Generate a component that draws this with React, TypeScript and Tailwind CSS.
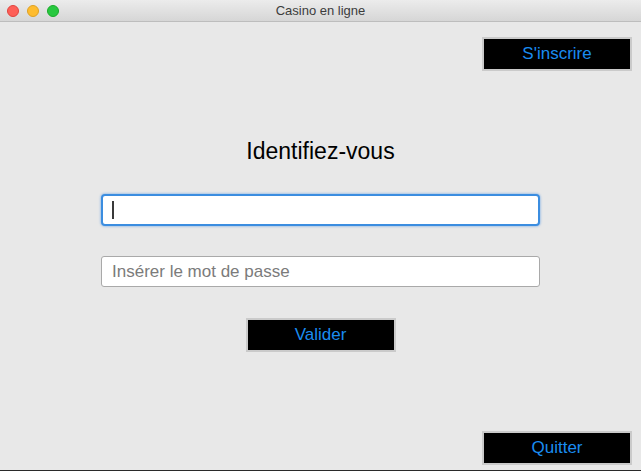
export default function App() {
  const font = { fontFamily: '"Liberation Sans", Arial, sans-serif' }
  return (
    <div
      className="flex h-[471px] w-[641px] flex-col overflow-hidden border-b border-[#2a2a2a] bg-[#e8e8e8]"
      style={font}
    >
      {/* Title bar */}
      <div className="relative flex h-[22px] shrink-0 items-center justify-center border-b border-[#bdbdbd] bg-gradient-to-b from-[#ececec] to-[#d6d6d6]">
        <div className="absolute left-[7px] top-[5px] flex gap-[8px]">
          <span className="h-[12px] w-[12px] rounded-full border border-[#e0443e] bg-[#fe5f57]" />
          <span className="h-[12px] w-[12px] rounded-full border border-[#dea123] bg-[#febc2e]" />
          <span className="h-[12px] w-[12px] rounded-full border border-[#1aab29] bg-[#28c840]" />
        </div>
        <span className="text-[13px] text-[#3c3c3c]">Casino en ligne</span>
      </div>

      <div className="flex flex-1 flex-col">
        <div className="flex justify-end pr-[9px] pt-[15px]">
          <button className="h-[34px] w-[150px] border-2 border-[#cacaca] bg-black text-[17px] text-[#1a8cf0]">
            S'inscrire
          </button>
        </div>

        <div className="flex flex-col items-center">
          <h1 className="mt-[67px] text-[23px] leading-[26px] text-black">Identifiez-vous</h1>

          <div className="mt-[30px] flex h-[32px] w-[439px] items-center rounded-[4px] border-2 border-[#3b8de0] bg-white pl-[9px] shadow-[0_0_2px_1px_rgba(80,150,230,0.4)]">
            <span className="h-[18px] w-[2px] bg-[#3a3a3a]" />
          </div>

          <div className="mt-[30px] flex h-[31px] w-[439px] items-center rounded-[3px] border border-[#a9a9a9] bg-white pl-[10px]">
            <span className="text-[17px] text-[#7b7b7b]">Insérer le mot de passe</span>
          </div>

          <button className="mt-[31px] h-[34px] w-[150px] border-2 border-[#cacaca] bg-black text-[17px] text-[#1a8cf0]">
            Valider
          </button>
        </div>

        <div className="mt-auto flex justify-end pb-[5px] pr-[9px]">
          <button className="h-[34px] w-[150px] border-2 border-[#cacaca] bg-black text-[17px] text-[#1a8cf0]">
            Quitter
          </button>
        </div>
      </div>
    </div>
  )
}
